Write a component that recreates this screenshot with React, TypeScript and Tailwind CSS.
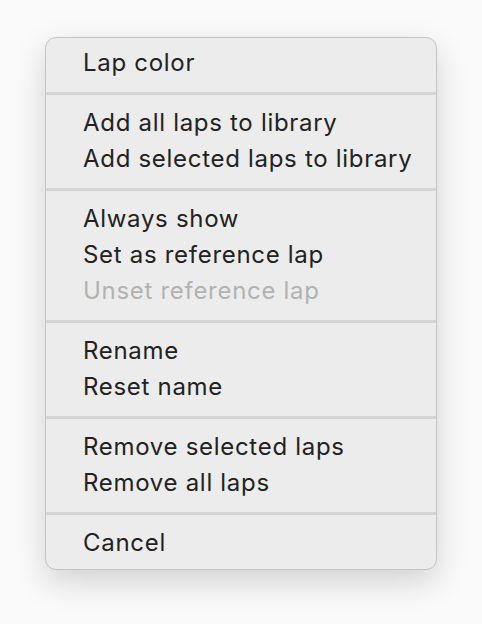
import * as React from 'react'

type Item = { label: string; disabled?: boolean }

const groups: Item[][] = [
  [{ label: 'Lap color' }],
  [{ label: 'Add all laps to library' }, { label: 'Add selected laps to library' }],
  [{ label: 'Always show' }, { label: 'Set as reference lap' }, { label: 'Unset reference lap', disabled: true }],
  [{ label: 'Rename' }, { label: 'Reset name' }],
  [{ label: 'Remove selected laps' }, { label: 'Remove all laps' }],
  [{ label: 'Cancel' }],
]

export default function App() {
  return (
    <div className="flex h-[624px] w-[482px] items-start bg-[#fafafa] pt-[37px] pl-[45px] font-['Inter',sans-serif]">
      <div className="w-[392px] rounded-[11px] border border-[#c4c4c4] bg-[#ececec] pt-[7px] pb-[8px] shadow-[0_12px_32px_rgba(0,0,0,0.16)]">
        {groups.map((group, gi) => (
          <React.Fragment key={gi}>
            {gi > 0 && (
              <div className="flex h-[24px] items-center">
                <div className="h-[3px] w-full bg-[#d4d4d4]" />
              </div>
            )}
            {group.map((item) => (
              <div
                key={item.label}
                className={
                  'flex h-[36px] items-center pl-[37px] text-[24px] tracking-[0.7px] ' +
                  (item.disabled ? 'text-[#b2b2b2]' : 'text-[#222222]')
                }
              >
                {item.label}
              </div>
            ))}
          </React.Fragment>
        ))}
      </div>
    </div>
  )
}
